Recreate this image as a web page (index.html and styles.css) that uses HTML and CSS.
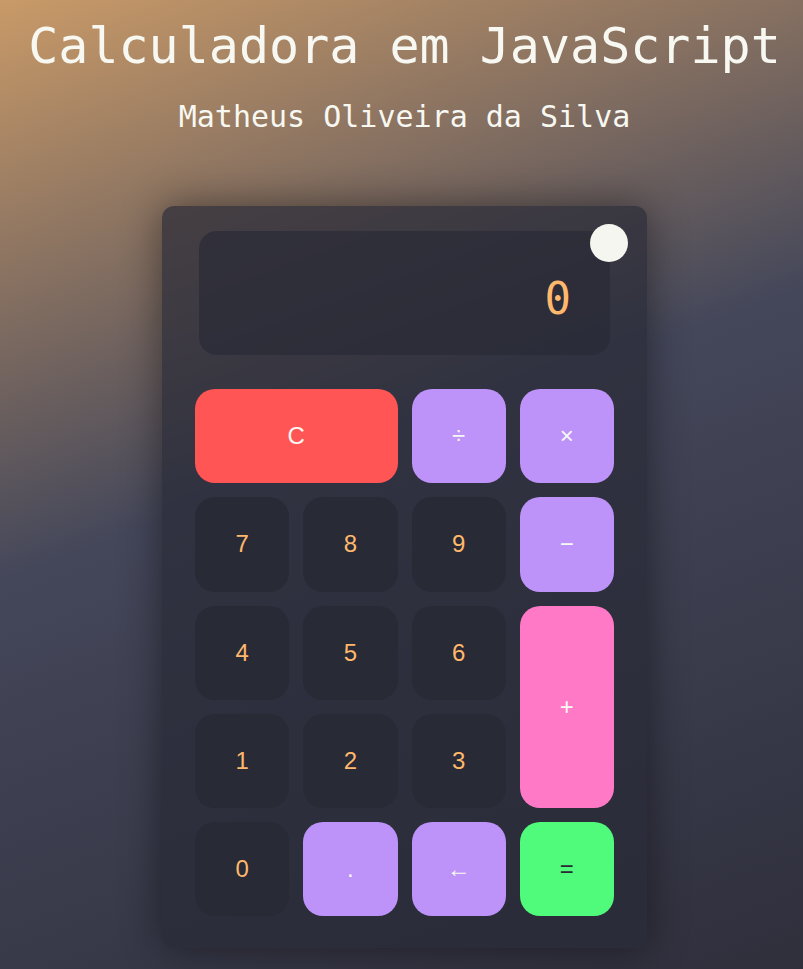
FILE: index.html
```html
<!DOCTYPE html>
<html lang="pt-BR">
<head>
<meta charset="utf-8">
<title>Calculadora em JavaScript</title>
<link rel="stylesheet" href="styles.css">
</head>
<body>
<main class="page">
  <h1 class="title">Calculadora em JavaScript</h1>
  <h2 class="subtitle">Matheus Oliveira da Silva</h2>
  <div class="calculator">
    <button class="theme-toggle" aria-label="Alternar tema"></button>
    <div class="display">0</div>
    <div class="keys">
      <button class="key key-clear key-wide">C</button>
      <button class="key key-op">÷</button>
      <button class="key key-op">×</button>
      <button class="key key-num">7</button>
      <button class="key key-num">8</button>
      <button class="key key-num">9</button>
      <button class="key key-op">−</button>
      <button class="key key-num">4</button>
      <button class="key key-num">5</button>
      <button class="key key-num">6</button>
      <button class="key key-plus key-tall">+</button>
      <button class="key key-num">1</button>
      <button class="key key-num">2</button>
      <button class="key key-num">3</button>
      <button class="key key-num">0</button>
      <button class="key key-op">.</button>
      <button class="key key-op">←</button>
      <button class="key key-equals">=</button>
    </div>
  </div>
</main>
</body>
</html>
```

FILE: styles.css
```css
html, body {
  margin: 0;
  padding: 0;
}

body {
  min-height: 969px;
  background: linear-gradient(160deg, #c99a68 0%, #44475a 46%, #2f2f3c 100%);
  font-family: "DejaVu Sans Mono", "Liberation Mono", monospace;
  color: #f8f8f2;
}

.page {
  display: flex;
  flex-direction: column;
  align-items: center;
  padding-left: 6px;
}

.title {
  margin: 16px 0 0;
  font-size: 50px;
  line-height: 60px;
  font-weight: normal;
  color: #f8f8f2;
  white-space: nowrap;
}

.subtitle {
  margin: 23px 0 0;
  font-size: 30px;
  line-height: 36px;
  font-weight: normal;
  color: #f8f8f2;
  white-space: nowrap;
}

.calculator {
  position: relative;
  box-sizing: border-box;
  width: 485px;
  margin-top: 71px;
  padding: 25px 33px 32px 33px;
  border-radius: 12px;
  background: rgba(40, 42, 54, 0.7);
  box-shadow: 0 0 40px rgba(0, 0, 0, 0.45);
}

.theme-toggle {
  position: absolute;
  top: 18px;
  right: 19px;
  width: 38px;
  height: 38px;
  padding: 0;
  border: none;
  border-radius: 50%;
  background: #f5f6ef;
}

.display {
  box-sizing: border-box;
  height: 124px;
  margin: 0 4px 0 4px;
  padding: 10px 39px 0 20px;
  display: flex;
  align-items: center;
  justify-content: flex-end;
  border-radius: 18px;
  background: rgba(40, 42, 54, 0.65);
  color: #ffb86c;
  font-family: "DejaVu Sans Mono", "Liberation Mono", monospace;
  font-size: 44px;
}

.keys {
  margin-top: 34px;
  display: grid;
  grid-template-columns: repeat(4, 1fr);
  grid-auto-rows: 94.3px;
  gap: 14px;
}

.key {
  border: none;
  border-radius: 20px;
  padding: 0;
  font-family: "Liberation Sans", Arial, sans-serif;
  font-size: 24px;
  color: #f8f8f2;
  cursor: pointer;
}

.key-num {
  background: #282a36;
  color: #ffb86c;
}

.key-op {
  background: #bd93f9;
  color: #f8f8f2;
}

.key-clear {
  background: #ff5555;
  color: #f8f8f2;
}

.key-plus {
  background: #ff79c6;
  color: #f8f8f2;
}

.key-equals {
  background: #50fa7b;
  color: #282a36;
}

.key-wide {
  grid-column: span 2;
}

.key-tall {
  grid-row: span 2;
}
```
